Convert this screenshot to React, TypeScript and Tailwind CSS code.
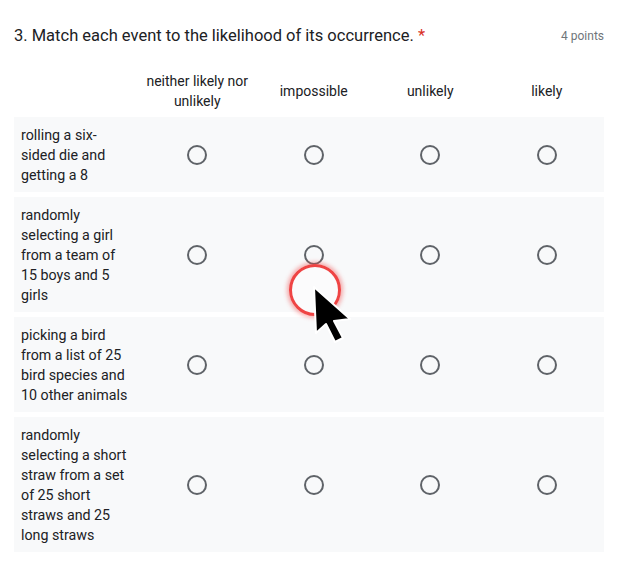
import React from 'react';

const columns = ['neither likely nor unlikely', 'impossible', 'unlikely', 'likely'];

const events = [
  'rolling a six-sided die and getting a 8',
  'randomly selecting a girl from a team of 15 boys and 5 girls',
  'picking a bird from a list of 25 bird species and 10 other animals',
  'randomly selecting a short straw from a set of 25 short straws and 25 long straws',
];

const Radio: React.FC = () => (
  <div className="w-5 h-5 rounded-full border-2 border-[#5f6368] bg-transparent" />
);

const Cursor: React.FC = () => (
  <div className="absolute left-[289px] top-[264px] pointer-events-none">
    <div className="w-[52px] h-[52px] rounded-full border-[3px] border-[#ef4444] bg-white/40 shadow-[0_0_4px_2px_rgba(239,68,68,0.45)]" />
    <svg className="absolute left-[23px] top-[21px]" width="44" height="62" viewBox="-2 -2 44 62">
      <path
        d="M0 0 L2 46 L12 37 L21 55 L29 51 L20 34 L36 32 Z"
        fill="#000"
        stroke="#fff"
        strokeWidth="2"
        strokeLinejoin="round"
      />
    </svg>
  </div>
);

export default function App() {
  return (
    <div className="relative w-[626px] h-[588px] bg-white font-['Roboto',sans-serif] text-[#202124]">
      <div className="px-[14px] pt-[24px]">
        <div className="flex items-center justify-between pr-[8px]">
          <div className="text-[16.5px] leading-6">
            3. Match each event to the likelihood of its occurrence. <span className="text-[#d93025]">*</span>
          </div>
          <div className="text-[12px] text-[#70757a]">4 points</div>
        </div>

        <div className="mt-[17px] w-[590px]">
          <div className="grid grid-cols-[125px_repeat(4,116.5px)] h-[52px] items-center">
            <div />
            {columns.map((c) => (
              <div key={c} className="text-center text-[14px] leading-5 px-1">
                {c}
              </div>
            ))}
          </div>

          <div className="flex flex-col gap-[5px]">
            {events.map((e) => (
              <div
                key={e}
                className="grid grid-cols-[125px_repeat(4,116.5px)] items-center bg-[#f8f9fa] py-[7.5px]"
              >
                <div className="pl-[7px] pr-[10px] text-[14.25px] leading-5">{e}</div>
                {columns.map((c) => (
                  <div key={c} className="flex justify-center">
                    <Radio />
                  </div>
                ))}
              </div>
            ))}
          </div>
        </div>
      </div>
      <Cursor />
    </div>
  );
}
